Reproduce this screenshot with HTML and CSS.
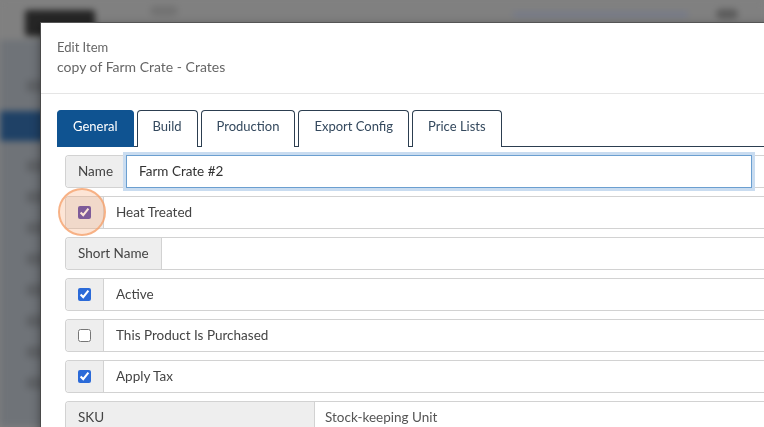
FILE: index.html
```html
<!DOCTYPE html>
<html>
<head>
<meta charset="utf-8">
<link rel="stylesheet" href="styles.css">
</head>
<body>
<div class="backdrop">
  <div class="bg-top">
    <div class="bg-logo"></div>
    <div class="bg-icon"></div>
    <div class="bg-links"></div>
    <div class="bg-user"></div>
  </div>
  <div class="bg-side">
    <div class="bg-item"></div>
    <div class="bg-item active"></div>
    <div class="bg-item"></div>
    <div class="bg-item"></div>
    <div class="bg-item"></div>
    <div class="bg-item"></div>
    <div class="bg-item"></div>
    <div class="bg-item"></div>
    <div class="bg-item"></div>
    <div class="bg-item"></div>
  </div>
</div>

<div class="modal">
  <div class="modal-header">
    <div class="title-line">Edit Item</div>
    <div class="title-line sub">copy of Farm Crate - Crates</div>
  </div>
  <div class="modal-body">
    <ul class="tabs">
      <li class="tab active">General</li>
      <li class="tab">Build</li>
      <li class="tab">Production</li>
      <li class="tab">Export Config</li>
      <li class="tab">Price Lists</li>
    </ul>
    <div class="form">
      <div class="row">
        <div class="addon">Name</div>
        <div class="text-input focused">Farm Crate #2</div>
      </div>
      <div class="row">
        <div class="addon check"><input type="checkbox" class="cb cb-heat" checked></div>
        <div class="label">Heat Treated</div>
      </div>
      <div class="row">
        <div class="addon">Short Name</div>
        <div class="value"></div>
      </div>
      <div class="row">
        <div class="addon check"><input type="checkbox" class="cb" checked></div>
        <div class="label">Active</div>
      </div>
      <div class="row">
        <div class="addon check"><input type="checkbox" class="cb"></div>
        <div class="label">This Product Is Purchased</div>
      </div>
      <div class="row">
        <div class="addon check"><input type="checkbox" class="cb" checked></div>
        <div class="label">Apply Tax</div>
      </div>
      <div class="row">
        <div class="addon wide">SKU</div>
        <div class="value sku">Stock-keeping Unit</div>
      </div>
    </div>
  </div>
  <div class="highlight"></div>
</div>
</body>
</html>
```

FILE: styles.css
```css
html, body {
  margin: 0;
  padding: 0;
  width: 764px;
  height: 427px;
  overflow: hidden;
  background: #808080;
  font-family: Lato, "Open Sans", sans-serif;
  font-size: 13px;
}

.backdrop {
  position: fixed;
  inset: 0;
  filter: blur(3px);
  display: flex;
  flex-direction: column;
}

.bg-top {
  height: 40px;
  display: flex;
  align-items: center;
  background: #808080;
}
.bg-logo {
  width: 70px;
  height: 26px;
  margin-left: 25px;
  margin-top: 6px;
  background: #262626;
  border-radius: 3px;
}
.bg-icon {
  width: 28px;
  height: 10px;
  margin-left: 55px;
  margin-top: -18px;
  background: #727272;
  border-radius: 5px;
}
.bg-links {
  width: 175px;
  height: 5px;
  margin-left: 335px;
  margin-top: -12px;
  background: #74798a;
}
.bg-user {
  width: 22px;
  height: 10px;
  margin-left: 28px;
  margin-top: -12px;
  background: #5c5c5c;
  border-radius: 5px;
}

.bg-side {
  width: 200px;
  flex: 1;
  background: #6f7378;
  padding-top: 40px;
  display: flex;
  flex-direction: column;
  gap: 19px;
}
.bg-item {
  height: 12px;
  margin-left: 26px;
  width: 40px;
  background: #606367;
  border-radius: 3px;
}
.bg-item.active {
  height: 30px;
  margin-left: 0;
  width: 200px;
  background: #1f4166;
  border-radius: 0;
}

.modal {
  position: absolute;
  left: 40px;
  top: 22px;
  width: 820px;
  height: 440px;
  background: #fff;
  border-left: 1px solid #4a4a4a;
  border-top: 1px solid #555;
  box-shadow: 0 3px 9px rgba(0, 0, 0, 0.4);
  color: #444;
}

.modal-header {
  padding: 14px 16px 16px;
  border-bottom: 1px solid #e5e5e5;
  color: #666;
}
.title-line {
  line-height: 20px;
}
.title-line.sub {
  font-size: 14px;
}

.modal-body {
  padding: 16px 16px 0;
}

.tabs {
  list-style: none;
  margin: 0;
  padding: 0;
  display: flex;
  gap: 3px;
  border-bottom: 1px solid #2c3e50;
}
.tab {
  padding: 6px 15px 12px;
  line-height: 18px;
  border: 1px solid #2c3e50;
  border-bottom: none;
  border-radius: 4px 4px 0 0;
  margin-bottom: -1px;
  background: #fff;
  color: #34495e;
}
.tab.active {
  background: #0f5391;
  border-color: #0f5391;
  color: #fff;
}

.form {
  padding: 8px;
  font-size: 13.5px;
}

.row {
  display: flex;
  height: 33px;
  box-sizing: border-box;
  border: 1px solid #d2d2d2;
  border-right: none;
  border-radius: 4px 0 0 4px;
  margin-bottom: 8px;
}
.addon {
  display: flex;
  align-items: center;
  padding: 0 12px 2px;
  background: #eee;
  border-right: 1px solid #d2d2d2;
  border-radius: 3px 0 0 3px;
  color: #444;
}
.addon.check {
  width: 13px;
  padding-bottom: 0;
}
.addon.wide {
  width: 224px;
}
.label, .value {
  display: flex;
  align-items: center;
  padding: 0 12px 2px;
  flex: 1;
  color: #444;
}
.value.sku {
  padding-left: 10px;
  color: #555;
}

.text-input {
  width: 600px;
  margin: -1px 0;
  padding: 0 12px 2px;
  display: flex;
  align-items: center;
  border: 1px solid #6b9fd0;
  box-shadow: 0 0 0 3px #c9dcf0;
  color: #333;
}

.cb {
  margin: 0;
  width: 13px;
  height: 13px;
  accent-color: #2b6ad8;
}
.cb-heat {
  accent-color: #4a3aa8;
}

.highlight {
  position: absolute;
  left: 17px;
  top: 165px;
  width: 44px;
  height: 44px;
  border-radius: 50%;
  border: 2px solid rgba(244, 160, 105, 0.75);
  background: rgba(248, 170, 120, 0.3);
}
```
